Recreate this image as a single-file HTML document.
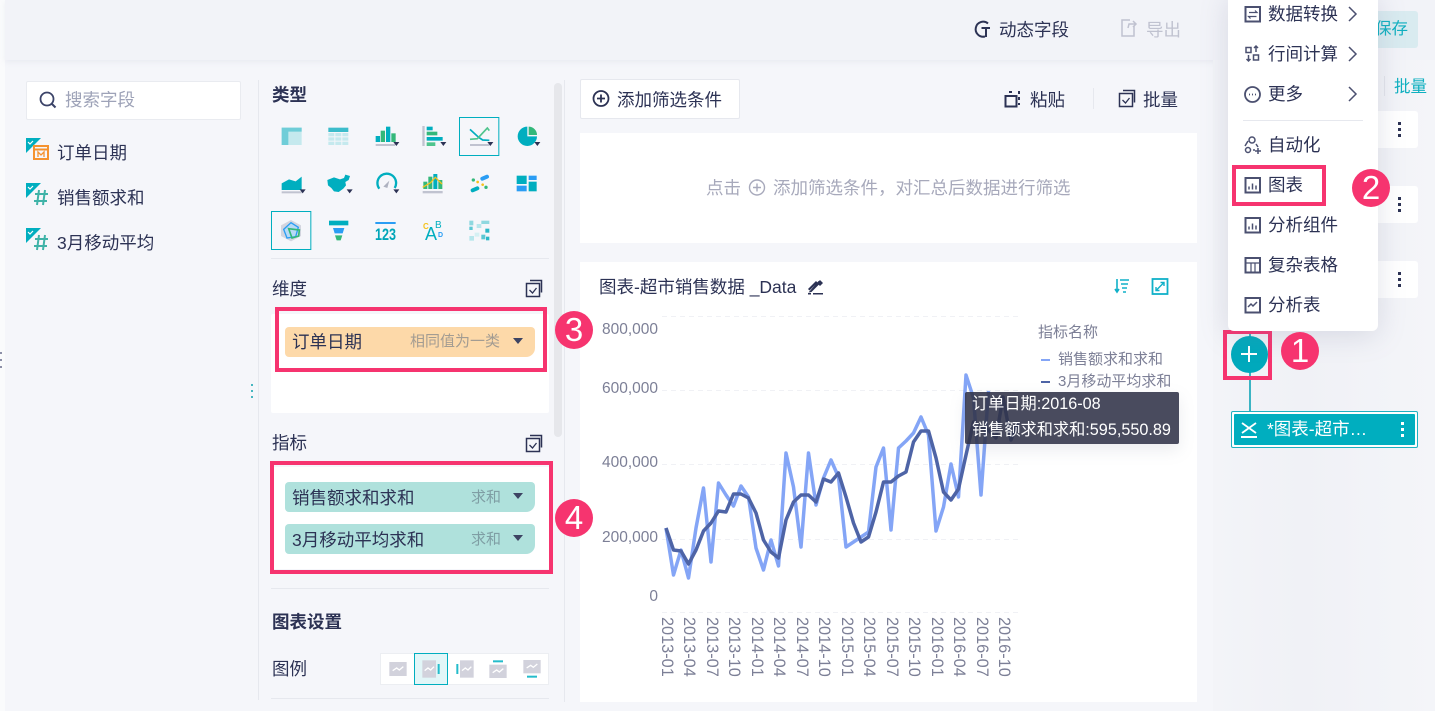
<!DOCTYPE html>
<html lang="zh-CN"><head><meta charset="utf-8"><title>图表</title>
<style>
html,body{margin:0;padding:0}
body{width:1435px;height:711px;overflow:hidden;position:relative;background:#f5f6fa;font-family:"Liberation Sans","Noto Sans CJK SC",sans-serif;color:#2c3254}
div,span{position:absolute;box-sizing:border-box}
.t{font-size:17.5px;line-height:24px;white-space:nowrap;margin-top:1px}
.w{background:#fff}
.chip{left:285px;width:250px;height:30px;border-radius:4px 4px 9px 4px}
.pink{border:4px solid #f6346f}
.badge{width:38px;height:38px;border-radius:50%;background:#f6346f;color:#fff;font-size:33px;line-height:38px;text-align:center;z-index:5}
.sub{font-size:15px;line-height:24px;white-space:nowrap;margin-top:1px}
.x{font-size:16.3px;line-height:16px;color:#7c7f96;white-space:nowrap;transform:rotate(90deg);transform-origin:0 0;top:617px}
.y{font-size:15.5px;line-height:20px;color:#7c7f96;right:777px;text-align:right;white-space:nowrap;margin-top:1px}
</style></head><body>

<div style="left:0;top:0;width:5px;height:711px;background:#fafbfc"></div>
<div style="left:5px;top:0;width:1430px;height:60px;background:#f2f3f8;box-shadow:0 2px 5px rgba(200,204,220,.25)"></div>
<div style="left:1213px;top:60px;width:222px;height:651px;background:linear-gradient(90deg,#f3f4f8,#f0f1f6 40%,#f4f5f9)"></div>

<div style="left:1370px;top:11px;width:48px;height:37px;background:#d9ebf0;border-radius:3px"></div>
<div class="t" style="left:1375px;top:16px;color:#10b0c0;font-size:16.5px">保存</div>
<div style="left:1384px;top:76px;width:1px;height:20px;background:#e2e4ea"></div>
<div class="t" style="left:1394px;top:74px;color:#10b0c0;font-size:16.5px">批量</div>
<div class="w" style="left:1370px;top:111px;width:48px;height:37px;border-radius:3px"></div>
<div class="w" style="left:1370px;top:186px;width:48px;height:37px;border-radius:3px"></div>
<div class="w" style="left:1370px;top:261px;width:48px;height:37px;border-radius:3px"></div>

<div class="t" style="left:999px;top:17px">动态字段</div>
<div class="t" style="left:1146px;top:17px;color:#c0c2d0">导出</div>

<!-- left fields -->
<div class="w" style="left:26px;top:81px;width:215px;height:39px;border:1px solid #e9ebf0;border-radius:2px"></div>
<div class="t" style="left:65px;top:87px;color:#9ea3b8">搜索字段</div>
<div class="t" style="left:57px;top:140px">订单日期</div>
<div class="t" style="left:57px;top:185px">销售额求和</div>
<div class="t" style="left:57px;top:230px">3月移动平均</div>
<div style="left:258px;top:80px;width:1px;height:620px;background:#e6e8ee"></div>

<!-- config -->
<div class="t" style="left:272px;top:82px;font-weight:bold">类型</div>
<div style="left:271px;top:258px;width:278px;height:1px;background:#e6e8ee"></div>
<div class="t" style="left:272px;top:276px">维度</div>
<div class="w" style="left:271px;top:314px;width:278px;height:99px;border-radius:2px"></div>
<div class="chip" style="top:327px;background:#fdd9a9"></div>
<div class="t" style="left:292px;top:329px">订单日期</div>
<div class="sub" style="left:410px;top:329px;color:#a39c92">相同值为一类</div>
<div class="pink" style="left:275px;top:307px;width:272px;height:65px"></div>
<div class="badge" style="left:555px;top:311px">3</div>

<div class="t" style="left:272px;top:430px">指标</div>
<div class="w" style="left:271px;top:467px;width:278px;height:102px"></div>
<div class="chip" style="top:482px;background:#afe1dc"></div>
<div class="chip" style="top:524px;background:#afe1dc"></div>
<div class="t" style="left:292px;top:485px">销售额求和求和</div>
<div class="t" style="left:292px;top:527px">3月移动平均求和</div>
<div class="sub" style="left:471px;top:485px;color:#7f9ea4">求和</div>
<div class="sub" style="left:471px;top:527px;color:#7f9ea4">求和</div>
<div class="pink" style="left:270px;top:461px;width:283px;height:113px"></div>
<div class="badge" style="left:555px;top:499px">4</div>
<div style="left:271px;top:588px;width:278px;height:1px;background:#e6e8ee"></div>
<div class="t" style="left:272px;top:609px;font-weight:bold">图表设置</div>
<div class="t" style="left:272px;top:656px">图例</div>
<div style="left:271px;top:698px;width:278px;height:1px;background:#e6e8ee"></div>
<div style="left:554px;top:83px;width:8px;height:354px;background:#e6e7eb;border-radius:4px"></div>
<div style="left:564px;top:80px;width:1px;height:622px;background:#e6e8ee"></div>

<!-- legend group -->
<div class="w" style="left:380px;top:653px;width:169px;height:32px;border:1px solid #eceef2"></div>
<div style="left:414px;top:653px;width:34px;height:32px;background:#e2f6f8;border:1px solid #00aebf"></div>

<!-- center -->
<div class="w" style="left:580px;top:79px;width:160px;height:40px;border:1px solid #e6e8ee;border-radius:2px"></div>
<div class="t" style="left:617px;top:87px">添加筛选条件</div>
<div class="t" style="left:1030px;top:87px">粘贴</div>
<div style="left:1093px;top:88px;width:1px;height:21px;background:#e6e8ee"></div>
<div class="t" style="left:1143px;top:87px">批量</div>
<div class="w" style="left:580px;top:133px;width:617px;height:110px"></div>
<div class="t" style="left:706px;top:175px;color:#a7a9bb">点击</div>
<div class="t" style="left:773px;top:175px;color:#a7a9bb">添加筛选条件，对汇总后数据进行筛选</div>
<div class="w" style="left:580px;top:262px;width:617px;height:440px"></div>
<div class="t" style="left:599px;top:274px">图表-超市销售数据 _Data</div>

<div class="y" style="top:319px">800,000</div>
<div class="y" style="top:378px">600,000</div>
<div class="y" style="top:452px">400,000</div>
<div class="y" style="top:527px">200,000</div>
<div class="y" style="top:586px">0</div>

<div class="x" style="left:675px">2013-01</div>
<div class="x" style="left:697px">2013-04</div>
<div class="x" style="left:720px">2013-07</div>
<div class="x" style="left:742px">2013-10</div>
<div class="x" style="left:765px">2014-01</div>
<div class="x" style="left:787px">2014-04</div>
<div class="x" style="left:810px">2014-07</div>
<div class="x" style="left:832px">2014-10</div>
<div class="x" style="left:855px">2015-01</div>
<div class="x" style="left:877px">2015-04</div>
<div class="x" style="left:900px">2015-07</div>
<div class="x" style="left:922px">2015-10</div>
<div class="x" style="left:945px">2016-01</div>
<div class="x" style="left:967px">2016-04</div>
<div class="x" style="left:990px">2016-07</div>
<div class="x" style="left:1012px">2016-10</div>

<div class="sub" style="left:1038px;top:320px;color:#7c7f96">指标名称</div>
<div class="sub" style="left:1058px;top:347px;color:#7c7f96">销售额求和求和</div>
<div class="sub" style="left:1058px;top:369px;color:#7c7f96">3月移动平均求和</div>

<!-- main svg -->
<svg width="1435" height="711" viewBox="0 0 1435 711" style="position:absolute;left:0;top:0" fill="none">
 <!-- chart grid -->
 <g stroke="#f0f1f5" stroke-width="1" stroke-dasharray="5 4">
  <path d="M662 316.500H1022M662 390.500H1022M662 464.500H1022M662 539.500H1022M662 612.500H1022"/>
 </g>
 <path d="M666 528 673.500 575 681 550 688.500 578 696 528 703.500 488 711 562 718.500 483 726 495 733.500 506 741 486 748.500 497 756 548 763.500 570 771 540 778.500 566 786 453 793.500 487 801 547 808.500 453 816 505 823.500 478 831 460 838.500 477 846 547 853.500 542 861 537 868.500 532 876 467 883.500 448 891 530 898.500 448 906 441 913.500 433 921 417 928.500 435 936 531 943.500 507 951 464 958.500 497 966 375 973.500 398 981 495 988.500 391" stroke="#84a5f6" stroke-width="3.500" stroke-linejoin="round"/>
 <path d="M666 528 673.500 550 681 551 688.500 564 696 550 703.500 531 711 523 718.500 511 726 512 733.500 494 741 494 748.500 498 756 513 763.500 540 771 552 778.500 558 786 520 793.500 502 801 495 808.500 495 816 502 823.500 479 831 482 838.500 473 846 497 853.500 523 861 542 868.500 537 876 512 883.500 482 891 482 898.500 476 906 472 913.500 442 921 431 928.500 431 936 458 943.500 492 951 500 958.500 489 966 455 973.500 422 981 428 988.500 430 996 438 1003 397 1011 440 1018 422" stroke="#4e64a6" stroke-width="3.500" stroke-linejoin="round"/>
 <path d="M1041 360h9" stroke="#84a5f6" stroke-width="2"/>
 <path d="M1041 382h9" stroke="#4e64a6" stroke-width="2"/>

 <!-- search + field icons -->
 <circle cx="47" cy="99" r="6.500" stroke="#3b4368" stroke-width="1.800"/><path d="M52 104l3.500 3.500" stroke="#3b4368" stroke-width="2"/>
 <g fill="#00aebf"><path d="M26 138h15l-15 15z"/><path d="M26 183h15l-15 15z"/><path d="M26 228h15l-15 15z"/></g>
 <g stroke="#fff" stroke-width="1.200"><path d="M28 142l2 2 3-3M28 187l2 2 3-3M28 232l2 2 3-3"/></g>
 <rect x="34" y="146" width="14" height="13" stroke="#f5922f" stroke-width="2"/><path d="M33 149.500h16" stroke="#f5922f" stroke-width="2"/><path d="M38 157v-5l3 3 3-3v5" stroke="#f5922f" stroke-width="1.300"/>
 <g stroke="#3fb3a8" stroke-width="2"><path d="M39 190l-2 15M45 190l-2 15M35 194h13M34 201h13"/><path d="M39 235l-2 15M45 235l-2 15M35 239h13M34 246h13"/></g>

 <!-- chart type icons (coords from 3x zoom) -->
 <g transform="translate(260 80) scale(.33333)">
  <rect x="598.500" y="112.500" width="118" height="114" stroke="#00aebf" stroke-width="3"/>
  <rect x="34.500" y="394.500" width="118" height="114" stroke="#00aebf" stroke-width="3"/>
  <rect x="65" y="143" width="60" height="52" fill="#c5e9ee"/><path d="M65 143h60v12H85v40H65z" fill="#6fcdd8"/>
  <rect x="205" y="143" width="60" height="13" fill="#3cbccb"/><g fill="#c5e9ee"><rect x="205" y="159" width="18" height="10"/><rect x="226" y="159" width="18" height="10"/><rect x="247" y="159" width="18" height="10"/><rect x="205" y="172" width="18" height="10"/><rect x="226" y="172" width="18" height="10"/><rect x="247" y="172" width="18" height="10"/><rect x="205" y="185" width="18" height="10"/><rect x="226" y="185" width="18" height="10"/><rect x="247" y="185" width="18" height="10"/></g>
  <rect x="347" y="168" width="13" height="18" fill="#00aebf"/><rect x="362" y="152" width="13" height="34" fill="#33b87a"/><rect x="378" y="140" width="13" height="46" fill="#00aebf"/><rect x="394" y="160" width="13" height="26" fill="#33b87a"/><rect x="347" y="192" width="58" height="6" fill="#c0c3d0"/><path d="M400 186h18l-9 12z" fill="#2c3254"/>
  <rect x="487" y="138" width="7" height="60" fill="#c0c3d0"/><rect x="500" y="140" width="18" height="11" fill="#00aebf"/><rect x="500" y="155" width="32" height="11" fill="#33b87a"/><rect x="500" y="171" width="48" height="11" fill="#00aebf"/><rect x="500" y="187" width="26" height="11" fill="#4fc48d"/><path d="M541 186h18l-9 12z" fill="#2c3254"/>
  <path d="M630 148l26 24 12 8 20 1" stroke="#00aebf" stroke-width="5"/><path d="M630 178l22-2 30-32 6 8" stroke="#4fc48d" stroke-width="5"/><rect x="630" y="192" width="58" height="6" fill="#c0c3d0"/><path d="M682 186h18l-9 12z" fill="#2c3254"/>
  <path d="M802 140a29 29 0 1 0 29 29h-29z" fill="#00aebf"/><path d="M806 140a25 25 0 0 1 25 25h-25z" fill="#33b87a"/><path d="M823 186h18l-9 12z" fill="#2c3254"/>
  <path d="M65 330v-20l22-12 20 6 18-14v40z" fill="#00aebf"/><rect x="65" y="334" width="60" height="6" fill="#c0c3d0"/><path d="M119 328h18l-9 12z" fill="#2c3254"/>
  <path d="M202 300L222 292 240 298 252 294 256 284 270 288 266 300 256 306 258 316 250 326 236 336 222 334 214 324 204 316Z" fill="#00aebf"/><path d="M260 328h18l-9 12z" fill="#2c3254"/>
  <path d="M358 326a28 28 0 1 1 46-2" stroke="#00aebf" stroke-width="7"/><path d="M370 320l18-18-6 22z" fill="#aeb2c0"/><path d="M400 328h18l-9 12z" fill="#2c3254"/>
  <rect x="490" y="305" width="12" height="22" fill="#33b87a"/><rect x="505" y="290" width="12" height="37" fill="#33b87a"/><rect x="520" y="282" width="12" height="45" fill="#00aebf"/><rect x="535" y="300" width="12" height="27" fill="#33b87a"/><path d="M488 322l24-14 14-16 20 20" stroke="#f5c21b" stroke-width="4"/><rect x="488" y="333" width="60" height="7" fill="#c0c3d0"/>
  <g stroke="#2a9df4" stroke-width="12" stroke-linecap="round"><path d="M667 296l14-6"/></g><g stroke="#00aebf" stroke-width="12" stroke-linecap="round"><path d="M638 331l14-6"/></g><circle cx="640" cy="300" r="5" fill="#33b87a"/><circle cx="653" cy="306" r="4" fill="#f5c21b"/><circle cx="668" cy="314" r="4" fill="#f5c21b"/><circle cx="678" cy="322" r="5" fill="#33b87a"/>
  <rect x="770" y="287" width="30" height="25" fill="#00aebf"/><rect x="806" y="287" width="24" height="13" fill="#2a9df4"/><rect x="806" y="305" width="24" height="29" fill="#00aebf"/><rect x="770" y="317" width="30" height="17" fill="#2a9df4"/>
  <path d="M93 420l30 16v32l-30 16-30-16v-32z" fill="#d3d5df"/><path d="M93 428l22 14-8 28-26 4-10-26z" fill="#b7daf6" stroke="#2a9df4" stroke-width="4"/><path d="M86 446l32 4-2 18-20 6z" stroke="#33b87a" stroke-width="5"/>
  <rect x="207" y="422" width="58" height="14" fill="#00aebf"/><path d="M219 444h34l-5 16h-24z" fill="#2a9df4"/><path d="M225 466h22l-5 15h-12z" fill="#33b87a"/>
  <rect x="346" y="426" width="61" height="6" fill="#2a9df4"/>
  <rect x="628" y="422" width="12" height="14" fill="#8fd8e0"/><rect x="650" y="432" width="14" height="12" fill="#b7e6ec"/><rect x="664" y="422" width="24" height="10" fill="#8fd8e0"/><rect x="628" y="440" width="10" height="10" fill="#5cc8d4"/><rect x="676" y="446" width="12" height="12" fill="#2bb8c8"/><rect x="644" y="458" width="14" height="12" fill="#d5f0f3"/><rect x="664" y="464" width="12" height="14" fill="#5cc8d4"/><rect x="628" y="468" width="14" height="14" fill="#b7e6ec"/><rect x="678" y="470" width="10" height="11" fill="#2bb8c8"/>
 </g>
 <text x="375" y="240" font-family="Liberation Sans" font-weight="bold" font-size="17" fill="#00a5b8" textLength="21" lengthAdjust="spacingAndGlyphs">123</text>
 <text x="425" y="240" font-family="Liberation Sans" font-size="18" fill="#00aebf">A</text>
 <text x="423" y="229" font-family="Liberation Sans" font-weight="bold" font-size="8" fill="#f5c21b">C</text>
 <text x="435" y="228" font-family="Liberation Sans" font-size="10" fill="#00aebf">B</text>
 <text x="438" y="237" font-family="Liberation Sans" font-weight="bold" font-size="7" fill="#2a9df4">D</text>

 <!-- section icons -->
 <g stroke="#2c3254" stroke-width="1.500">
  <rect x="526.500" y="283.500" width="13" height="13"/><path d="M530 280.500h11.500v12"/><path d="M529.500 290l3 3 4-5" stroke-width="1.300"/>
  <rect x="526.500" y="438.500" width="13" height="13"/><path d="M530 435.500h11.500v12"/><path d="M529.500 445l3 3 4-5" stroke-width="1.300"/>
  <rect x="1119.500" y="93.500" width="13" height="13"/><path d="M1123 90.500h11.500v12"/><path d="M1122.500 100l3 3 4-5" stroke-width="1.300"/>
  <rect x="1005.500" y="96" width="11" height="10.500" stroke-width="2"/><path d="M1009 92h3M1019 91v3M1019 97v3M1019 103v2" stroke-width="2"/>
  <circle cx="601" cy="98.500" r="7.500" stroke-width="1.800"/><path d="M597 98.500h8M601 94.500v8" stroke-width="1.800"/>
  <path d="M988 23.500a7.500 7.500 0 1 0-3 13M981.500 28h8.500M986 28v9" stroke-width="2"/>
 </g>
 <g stroke="#c0c2d0" stroke-width="1.500"><path d="M1134 26v10h-12V20h8"/><path d="M1128 28l1-4h6M1133 21l3 3-3 3"/></g>
 <g stroke="#a7a9bb" stroke-width="1.400"><circle cx="757" cy="187.500" r="7.500"/><path d="M753 187.500h8M757 183.500v8"/></g>

 <!-- pencil + tools -->
 <path d="M808 289l8-8 1.500 1.500-8 8zM818.500 281l2 2-9 9-3 .5zM817 283l3-3 3 3-3 3zM808 293h3v1.500h-3zM813 293h10v1.500h-10z" fill="#2c3254"/>
 <g stroke="#10b0c8" stroke-width="1.800"><path d="M1120 280h9M1121 284h7M1122 288h5M1123 292h3M1117 279v13M1115 289l2 3 2-3" stroke-width="1.600"/><rect x="1152.500" y="279" width="15" height="15"/><path d="M1156 290.500l8-8M1160.500 282.500h3.500v3.500M1156 287v3.500h3.500" stroke-width="1.400"/></g>

 <!-- legend mini icons -->
 <g transform="translate(260 590) scale(.33333)" fill="#d2d2dc">
  <rect x="388" y="216" width="52" height="42"/><rect x="487" y="211" width="41" height="52"/><rect x="600" y="211" width="41" height="52"/><rect x="688" y="224" width="52" height="40"/><rect x="790" y="210" width="52" height="40"/>
  <g stroke="#fff" stroke-width="4" fill="none"><path d="M398 242l12-8 8 6 12-10"/><path d="M494 242l10-8 8 6 10-10"/><path d="M606 242l10-8 8 6 10-10"/><path d="M698 248l12-8 8 6 12-10"/><path d="M800 234l12-8 8 6 12-10"/></g>
  <g fill="#24bccb"><rect x="533" y="222" width="6" height="30"/><rect x="589" y="222" width="6" height="30"/><rect x="699" y="211" width="30" height="6"/><rect x="801" y="257" width="30" height="6"/></g>
 </g>

 <!-- small dots -->
 <g fill="#46b6c0"><rect x="251" y="384" width="2" height="2"/><rect x="251" y="390" width="2" height="2"/><rect x="251" y="396" width="2" height="2"/></g>
 <g fill="#8c8fa8"><rect x="0" y="352" width="2" height="2"/><rect x="0" y="359" width="2" height="2"/><rect x="0" y="366" width="2" height="2"/></g>

 <!-- chip carets -->
 <g fill="#3d4463"><path d="M513 338h10l-5 6zM513 493h10l-5 6zM513 535h10l-5 6z"/></g>
 <g fill="#2c3254"><rect x="1398" y="122" width="3" height="3"/><rect x="1398" y="128" width="3" height="3"/><rect x="1398" y="134" width="3" height="3"/><rect x="1398" y="197" width="3" height="3"/><rect x="1398" y="203" width="3" height="3"/><rect x="1398" y="209" width="3" height="3"/><rect x="1398" y="272" width="3" height="3"/><rect x="1398" y="278" width="3" height="3"/><rect x="1398" y="284" width="3" height="3"/></g>
</svg>

<!-- tooltip -->
<div style="left:965px;top:392px;width:214px;height:52px;background:rgba(48,50,72,.88);border-radius:2px;box-shadow:0 6px 16px rgba(120,125,150,.15)"></div>
<div class="t" style="left:972px;top:390px;color:#fff;font-size:16.200px;line-height:26px">订单日期:2016-08<br>销售额求和求和:595,550.89</div>

<!-- right flow -->
<div style="left:1249px;top:330px;width:1.500px;height:82px;background:#3cb4c4"></div>
<div style="left:1230.500px;top:335.500px;width:37px;height:37px;border-radius:50%;background:#00a9bc"></div>
<div style="left:1241px;top:353px;width:16px;height:2px;background:#fff"></div>
<div style="left:1248px;top:346px;width:2px;height:16px;background:#fff"></div>
<div class="pink" style="left:1223px;top:330px;width:49px;height:50px"></div>
<div class="badge" style="left:1281px;top:332px">1</div>
<div style="left:1231px;top:411px;width:187px;height:37px;background:#fff;border:1px solid #1fb0c0;border-radius:2px"></div>
<div style="left:1234px;top:414px;width:181px;height:31px;background:#00aebf;border-radius:1px"></div>
<div class="t" style="left:1267px;top:416px;color:#fff">*图表-超市…</div>
<svg width="1435" height="711" viewBox="0 0 1435 711" style="position:absolute;left:0;top:0" fill="none">
 <path d="M1242 423l7 5 7-5M1242 433l7-5 7 5" stroke="#fff" stroke-width="1.800"/><path d="M1241 437h16" stroke="#fff" stroke-width="2"/>
 <g fill="#fff"><rect x="1401" y="422" width="3" height="3"/><rect x="1401" y="428" width="3" height="3"/><rect x="1401" y="434" width="3" height="3"/></g>
</svg>

<!-- dropdown menu -->
<div class="w" style="left:1228px;top:-5px;width:150px;height:336px;border-radius:0 0 6px 6px;box-shadow:0 4px 28px rgba(120,125,155,.22)"></div>
<div class="t" style="left:1268px;top:1px">数据转换</div>
<div class="t" style="left:1268px;top:41px">行间计算</div>
<div class="t" style="left:1268px;top:81px">更多</div>
<div style="left:1243px;top:120px;width:120px;height:1px;background:#e6e8ee"></div>
<div class="t" style="left:1268px;top:132px">自动化</div>
<div class="t" style="left:1268px;top:172px">图表</div>
<div class="t" style="left:1268px;top:212px">分析组件</div>
<div class="t" style="left:1268px;top:252px">复杂表格</div>
<div class="t" style="left:1268px;top:292px">分析表</div>
<svg width="1435" height="711" viewBox="0 0 1435 711" style="position:absolute;left:0;top:0" fill="none">
 <g stroke="#4b5070" stroke-width="1.500">
  <path d="M1349 7l7 7-7 7M1349 47l7 7-7 7M1349 87l7 7-7 7"/>
  <rect x="1245.500" y="7" width="14.500" height="14.500" stroke-width="2"/><path d="M1249 12.500h8l-2-2M1256.500 16.500h-8l2 2" stroke-width="1.200"/>
  <rect x="1246" y="47.500" width="5" height="5"/><rect x="1253.500" y="55" width="5" height="5"/><path d="M1256 46v6M1254 48l2-2 2 2M1248.500 55v6M1246.500 59l2 2 2-2"/>
  <circle cx="1252.500" cy="94.500" r="7.500" stroke-width="1.800"/><path d="M1249 94.500h1M1252 94.500h1M1255 94.500h1" stroke-width="1.800"/>
  <circle cx="1252" cy="140" r="3"/><circle cx="1248" cy="150" r="2.500"/><path d="M1245 146l3-5M1256 144l2 3M1253 150h2M1258 148v6M1255 151h6"/>
  <rect x="1245.500" y="178" width="14.500" height="14.500" stroke-width="2"/><rect x="1245.500" y="218" width="14.500" height="14.500" stroke-width="2"/><path d="M1249 189.500v-3M1252.500 189.500v-6M1256 189.500v-4M1249 229.500v-3M1252.500 229.500v-6M1256 229.500v-4"/>
  <rect x="1245.500" y="258" width="14.500" height="14.500" stroke-width="2"/><path d="M1245.500 263h14.500M1251 263v9.500M1255 263v9.500" stroke-width="1.200"/>
  <rect x="1245.500" y="298" width="14.500" height="14.500" stroke-width="2"/><path d="M1248 307l3-3 2 2 4-4"/>
 </g>
</svg>
<div class="pink" style="left:1232px;top:165px;width:94px;height:41px"></div>
<div class="badge" style="left:1352px;top:169px">2</div>
</body></html>
